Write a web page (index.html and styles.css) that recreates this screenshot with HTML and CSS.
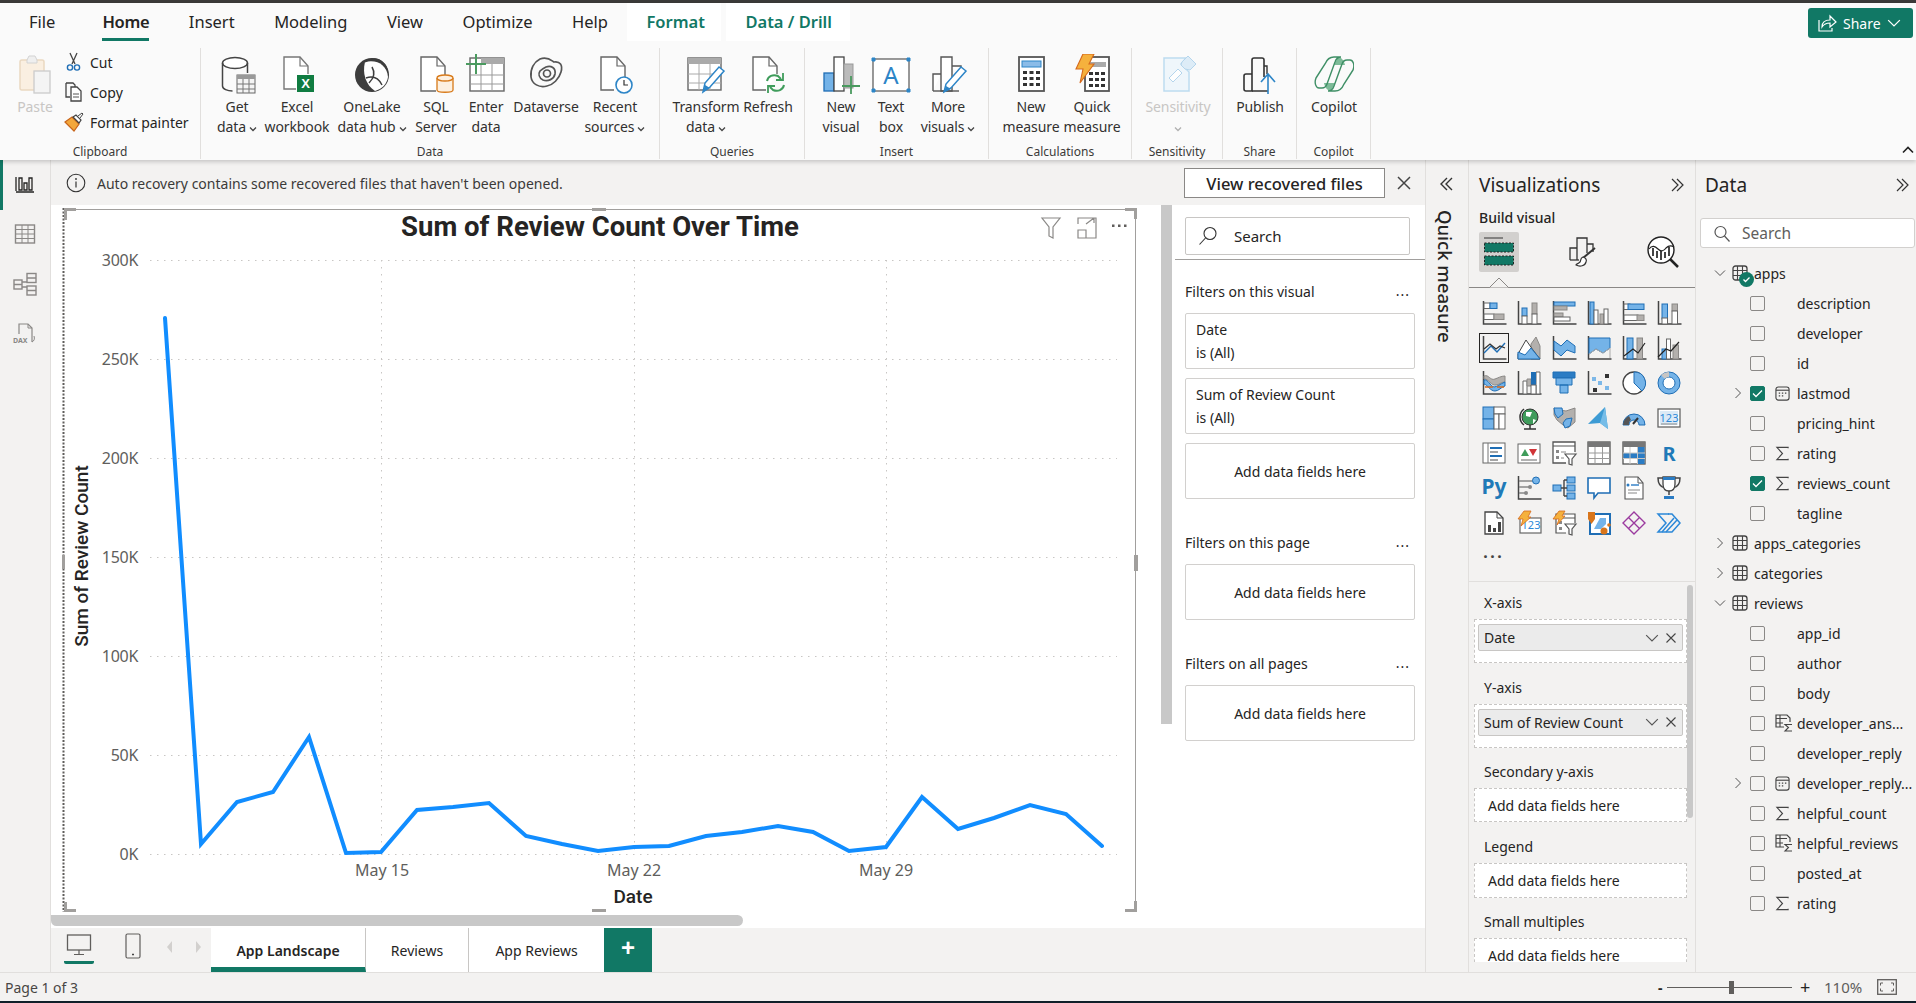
FILE: index.html
```html
<!DOCTYPE html>
<html lang="en">
<head>
<meta charset="utf-8">
<title>Power BI Desktop</title>
<link rel="stylesheet" href="styles.css">
</head>
<body>
<svg class="defs" xmlns="http://www.w3.org/2000/svg">
  <symbol id="tbl" viewBox="0 0 16 16"><rect x="1" y="1" width="14" height="14" rx="2.5" fill="none" stroke="#444" stroke-width="1.3"/><path d="M1 5.5h14M1 10.5h14M5.5 1v14M10.5 1v14" stroke="#444" stroke-width="1.1" fill="none"/></symbol>
  <symbol id="sig" viewBox="0 0 16 16"><path d="M14 2.5V1.5H2l6 6.5-6 6.5h12v-1" fill="none" stroke="#444" stroke-width="1.2"/></symbol>
  <symbol id="cal" viewBox="0 0 16 16"><rect x="1" y="1" width="14" height="14" rx="2.5" fill="none" stroke="#444" stroke-width="1.2"/><path d="M1 4.5h14" stroke="#444" stroke-width="1.2"/><path d="M4 7.5h1.5M7.3 7.5h1.5M10.6 7.5h1.5M4 10.5h1.5M7.3 10.5h1.5" stroke="#444" stroke-width="1.3"/></symbol>
  <symbol id="mtb" viewBox="0 0 18 18"><path d="M9 13H1V1h11l3 3v4" fill="none" stroke="#444" stroke-width="1.2"/><path d="M1 4.5h11M5 1v12M1 9h7" stroke="#444" stroke-width="1.1" fill="none"/><path d="M17 10.5h-7l3.5 3-3.5 3.5h7" fill="none" stroke="#444" stroke-width="1.1"/></symbol>
  <symbol id="chd" viewBox="0 0 12 12"><path d="M1 3.5l5 5 5-5" fill="none" stroke="#555" stroke-width="1"/></symbol>
  <symbol id="chr" viewBox="0 0 12 12"><path d="M3.5 1l5 5-5 5" fill="none" stroke="#555" stroke-width="1"/></symbol>
  <symbol id="x" viewBox="0 0 12 12"><path d="M1.5 1.5l9 9M10.5 1.5l-9 9" fill="none" stroke="#444" stroke-width="1.1"/></symbol>
  <symbol id="dbl" viewBox="0 0 16 16"><path d="M3 2l6 6-6 6M8 2l6 6-6 6" fill="none" stroke="#333" stroke-width="1.2"/></symbol>
  <symbol id="dbll" viewBox="0 0 16 16"><path d="M13 2L7 8l6 6M8 2L2 8l6 6" fill="none" stroke="#333" stroke-width="1.4"/></symbol>
  <symbol id="mag" viewBox="0 0 18 18"><circle cx="7.5" cy="7" r="5.5" fill="none" stroke="#555" stroke-width="1.2"/><path d="M11.5 11l5 5.5" stroke="#555" stroke-width="1.2"/></symbol>
  <symbol id="mini" viewBox="0 0 8 8"><path d="M1 2.5l3 3 3-3" fill="none" stroke="#444" stroke-width="1.3"/></symbol>
</svg>

<div class="topbar"></div>

<header class="ribbon">
  <nav class="tabs">
    <span class="tab file">File</span>
    <span class="tab on">Home</span>
    <span class="tab">Insert</span>
    <span class="tab">Modeling</span>
    <span class="tab">View</span>
    <span class="tab">Optimize</span>
    <span class="tab">Help</span>
    <span class="ctx first">Format</span>
    <span class="ctx">Data / Drill</span>
    <button class="share">
      <svg width="20" height="20" viewBox="0 0 20 20"><path d="M2 7v11h13v-3" fill="none" stroke="#fff" stroke-width="1.2"/><path d="M5 14c0-5 3-7 8-7V3l6 6-6 5v-4c-4 0-6 1-8 4z" fill="none" stroke="#fff" stroke-width="1.2"/></svg>
      <span>Share</span>
      <svg width="14" height="14" viewBox="0 0 12 12"><path d="M1 3.5l5 5 5-5" fill="none" stroke="#fff" stroke-width="1.1"/></svg>
    </button>
  </nav>
  <div class="groups">
    <section class="group g-clip">
      <div class="items pl14">
        <div class="item w42 dim">
          <svg class="ico" viewBox="0 0 40 40"><rect x="5" y="6" width="24" height="30" rx="2" fill="#fbeedd" stroke="#e8d3b8" stroke-width="1.5"/><path d="M12 6l2-4h6l2 4v3H12z" fill="#eee" stroke="#ccc"/><rect x="19" y="17" width="16" height="22" fill="#f4f4f4" stroke="#c4c4c4" stroke-width="1.3"/></svg>
          <div class="lbl">Paste</div>
        </div>
        <ul class="cliplist">
          <li><svg class="sm" viewBox="0 0 20 20"><path d="M6 1l5 11M13 1L8 12" stroke="#444" stroke-width="1.3" fill="none"/><circle cx="6" cy="15.5" r="2.6" fill="none" stroke="#1f6eb5" stroke-width="1.4"/><circle cx="13" cy="15.5" r="2.6" fill="none" stroke="#1f6eb5" stroke-width="1.4"/></svg>Cut</li>
          <li><svg class="sm" viewBox="0 0 20 20"><path d="M2 1h7l2 2v2M2 1v14h4" fill="none" stroke="#444" stroke-width="1.3"/><path d="M7 5h6l4 4v10H7z" fill="#fff" stroke="#444" stroke-width="1.3"/><path d="M9 12h6M9 15h6" stroke="#555"/></svg>Copy</li>
          <li><svg class="sm" viewBox="0 0 20 20"><path d="M1 10l7-5 7 7-5 7z" fill="#f3a73c" stroke="#c8651b" stroke-width="1.2"/><path d="M9 5l3-2 5 5-2 3z" fill="#fff" stroke="#444" stroke-width="1.2"/><path d="M14 4l4-3 1 1-3 4" fill="#fff" stroke="#444"/></svg>Format painter</li>
        </ul>
      </div>
      <div class="gname">Clipboard</div>
    </section>

    <section class="group g-data">
      <div class="items pl6">
        <div class="item w60">
          <svg class="ico" viewBox="0 0 40 40"><ellipse cx="18" cy="9" rx="12.5" ry="5.5" fill="#fff" stroke="#444" stroke-width="1.5"/><path d="M5.500 9v23c0 3 5 5 10 5" fill="none" stroke="#444" stroke-width="1.5"/><path d="M30.500 9v10" stroke="#444" stroke-width="1.5"/><rect x="20" y="21" width="18" height="18" fill="#f4f4f4" stroke="#666"/><rect x="20" y="21" width="18" height="4" fill="#999"/><path d="M26 25v14M32 25v14M20 30h18M20 35h18" stroke="#777"/></svg>
          <div class="lbl">Get<br>data<svg class="mini"><use href="#mini"/></svg></div>
        </div>
        <div class="item w60">
          <svg class="ico" viewBox="0 0 40 40"><path d="M19 35H7V3h16l8 9v8" fill="#fff" stroke="#777" stroke-width="1.4"/><path d="M23 3v9h8" fill="none" stroke="#777" stroke-width="1.2"/><rect x="20" y="21" width="17" height="17" fill="#107c41"/><text x="28.500" y="34" class="xl">X</text></svg>
          <div class="lbl">Excel<br>workbook</div>
        </div>
        <div class="item w90">
          <svg class="ico" viewBox="0 0 40 40"><circle cx="20" cy="21" r="17" fill="#3d3d3d"/><path d="M13 8c12-3 22 3 23 15-1 7-6 12-13 14C14 31 10 20 13 8z" fill="#fff"/><path d="M14 24c6-2 12-1 16 7M20 13c3 5 2 11-3 16M13 8c4-3 10-4 14-2 4 2 7 6 8 10" fill="none" stroke="#3d3d3d" stroke-width="1.5"/></svg>
          <div class="lbl">OneLake<br>data hub<svg class="mini"><use href="#mini"/></svg></div>
        </div>
        <div class="item w38">
          <svg class="ico" viewBox="0 0 40 40"><path d="M20 37H5V3h16l8 9v10" fill="#fff" stroke="#666" stroke-width="1.4"/><path d="M21 3v9h8" fill="none" stroke="#666" stroke-width="1.2"/><path d="M21 24v12c0 3 16 3 16 0V24" fill="#fdf0e0" stroke="#d87a1a" stroke-width="1.3"/><ellipse cx="29" cy="24" rx="8" ry="3" fill="#fdf0e0" stroke="#d87a1a" stroke-width="1.3"/></svg>
          <div class="lbl">SQL<br>Server</div>
        </div>
        <div class="item w62">
          <svg class="ico" viewBox="0 0 40 40"><rect x="4" y="4" width="34" height="33" fill="#fff" stroke="#666" stroke-width="1.4"/><rect x="15" y="4" width="23" height="6" fill="#aaa"/><path d="M15 10v27M26 10v27M4 21h34M4 30h34" stroke="#999"/><path d="M10 0v20M0 10h20" stroke="#4a9a5f" stroke-width="2"/></svg>
          <div class="lbl">Enter<br>data</div>
        </div>
        <div class="item w58">
          <svg class="ico" viewBox="0 0 40 40" fill="none" stroke="#555" stroke-width="1.7"><path d="M14 5c8-3 12 2 14 3 6-1 9 3 7 10-2 7-8 13-14 14C13 34 6 30 5 23 4 15 8 8 14 5z"/><path d="M20 13c5-2 10 1 9 7-1 5-7 8-12 6-4-2-5-6-3-9 2-2 4-3 6-4z"/><circle cx="21" cy="19.500" r="3.500"/></svg>
          <div class="lbl">Dataverse</div>
        </div>
        <div class="item w80">
          <svg class="ico" viewBox="0 0 40 40"><path d="M19 36H6V3h16l8 9v11" fill="#fff" stroke="#666" stroke-width="1.4"/><path d="M22 3v9h8" fill="none" stroke="#666" stroke-width="1.2"/><circle cx="29" cy="31" r="8" fill="#fff" stroke="#2d85c7" stroke-width="1.6"/><path d="M29 26v5h4" fill="none" stroke="#333" stroke-width="1.2"/></svg>
          <div class="lbl">Recent<br>sources<svg class="mini"><use href="#mini"/></svg></div>
        </div>
      </div>
      <div class="gname">Data</div>
    </section>

    <section class="group g-query">
      <div class="items pl1">
        <div class="item w90">
          <svg class="ico" viewBox="0 0 40 40"><rect x="2" y="4" width="33" height="32" fill="#fff" stroke="#666" stroke-width="1.4"/><rect x="2" y="4" width="33" height="6" fill="#aaa"/><path d="M13 10v26M24 10v26M2 20h33M2 29h33" stroke="#aaa"/><path d="M17 38l2-9 14-16 5 4-14 16z" fill="#fff" stroke="#2d85c7" stroke-width="1.5"/><path d="M17 38l2-7 5 3z" fill="#2d85c7"/></svg>
          <div class="lbl">Transform<br>data<svg class="mini"><use href="#mini"/></svg></div>
        </div>
        <div class="item w34">
          <svg class="ico" viewBox="0 0 40 40"><path d="M18 36H5V3h16l8 9v8" fill="#fff" stroke="#666" stroke-width="1.4"/><path d="M21 3v9h8" fill="none" stroke="#666" stroke-width="1.2"/><path d="M19 27c1-5 6-7 11-5l3 3M36 31c-1 5-6 7-11 5l-3-3" fill="none" stroke="#3f9c5b" stroke-width="2"/><path d="M35 19v7h-7M20 39v-7h7" fill="none" stroke="#3f9c5b" stroke-width="1.8"/></svg>
          <div class="lbl">Refresh</div>
        </div>
      </div>
      <div class="gname">Queries</div>
    </section>

    <section class="group g-insert">
      <div class="items pl11">
        <div class="item w50">
          <svg class="ico" viewBox="0 0 40 40"><rect x="3" y="19" width="10" height="18" fill="#74b3e8" stroke="#1f6eb5" stroke-width="1.3"/><rect x="13" y="3" width="10" height="34" fill="#fff" stroke="#444" stroke-width="1.3"/><rect x="23" y="10" width="9" height="24" fill="#bbb" stroke="#999"/><path d="M30 22v18M21 32h18" stroke="#4a9a5f" stroke-width="1.8"/></svg>
          <div class="lbl">New<br>visual</div>
        </div>
        <div class="item w50">
          <svg class="ico" viewBox="0 0 40 40"><rect x="2" y="5" width="36" height="32" fill="#fff" stroke="#555" stroke-width="1.2"/><path d="M1 4h3v3H1zM36 4h3v3h-3zM1 35h3v3H1zM36 35h3v3h-3z" fill="#2d85c7" stroke="#2d85c7"/><text x="20" y="30" class="alett">A</text></svg>
          <div class="lbl">Text<br>box</div>
        </div>
        <div class="item w64">
          <svg class="ico" viewBox="0 0 40 40"><path d="M5 37V20h8M13 37V3h11v34zM24 12h9v10" fill="#fff" stroke="#555" stroke-width="1.4"/><path d="M5 37h26" stroke="#555" stroke-width="1.4"/><path d="M16 38l2-8 15-17 5 4-15 17z" fill="#fff" stroke="#2d85c7" stroke-width="1.5"/><path d="M16 38l2-6 5 3z" fill="#2d85c7"/></svg>
          <div class="lbl">More<br>visuals<svg class="mini"><use href="#mini"/></svg></div>
        </div>
      </div>
      <div class="gname">Insert</div>
    </section>

    <section class="group g-calc">
      <div class="items pl12">
        <div class="item w60">
          <svg class="ico" viewBox="0 0 40 40"><rect x="8" y="3" width="25" height="34" fill="#fff" stroke="#555" stroke-width="1.8"/><rect x="11" y="7" width="19" height="6" fill="#8bbce8" stroke="#2d85c7"/><path d="M12 17h4v3h-4zM18.500 17h4v3h-4zM25 17h4v3h-4zM12 23h4v3h-4zM18.500 23h4v3h-4zM25 23h4v3h-4zM12 29h4v3h-4zM18.500 29h4v3h-4zM25 29h4v3h-4z" fill="#333"/></svg>
          <div class="lbl">New<br>measure</div>
        </div>
        <div class="item w62">
          <svg class="ico" viewBox="0 0 40 40"><rect x="13" y="3" width="24" height="34" fill="#fff" stroke="#555" stroke-width="1.8"/><rect x="18" y="8" width="16" height="5" fill="#aaa"/><path d="M17 18h4v3h-4zM23 18h4v3h-4zM29 18h4v3h-4zM17 24h4v3h-4zM23 24h4v3h-4zM29 24h4v3h-4zM17 30h4v3h-4zM23 30h4v3h-4zM29 30h4v3h-4z" fill="#333"/><path d="M11 0h11l-5 10h5L8 29l3-14H4z" fill="#f5b13d" stroke="#d6691c" stroke-width="1.1"/></svg>
          <div class="lbl">Quick<br>measure</div>
        </div>
      </div>
      <div class="gname">Calculations</div>
    </section>

    <section class="group g-sens">
      <div class="items pl1">
        <div class="item w90 dim">
          <svg class="ico" viewBox="0 0 40 40"><path d="M6 4h22l-5 6 8 8v19H6z" fill="#eef6fc" stroke="#b4d7ee" stroke-width="1.5"/><path d="M24 8l6-6 8 8-6 6-5-1-4-4z" fill="#d8eaf7" stroke="#a9cfea"/><path d="M11 24l9-9 4 4-9 9z" fill="#fff" stroke="#a9cfea"/></svg>
          <div class="lbl">Sensitivity<br><svg class="mini"><use href="#mini"/></svg></div>
        </div>
      </div>
      <div class="gname">Sensitivity</div>
    </section>

    <section class="group g-share">
      <div class="items">
        <div class="item w74">
          <svg class="ico" viewBox="0 0 40 40"><path d="M6 37a2 2 0 0 1-2-2V22a2 2 0 0 1 2-2h6v17zM12 37V6a2 2 0 0 1 2-2h8a2 2 0 0 1 2 2v17" fill="none" stroke="#333" stroke-width="1.6"/><path d="M12 37h16M24 12h3v8" fill="none" stroke="#333" stroke-width="1.4"/><path d="M28 40V21M21 28l7-8 7 8" fill="none" stroke="#2d85c7" stroke-width="1.6"/></svg>
          <div class="lbl">Publish</div>
        </div>
      </div>
      <div class="gname">Share</div>
    </section>

    <section class="group g-copilot">
      <div class="items">
        <div class="item w74">
          <svg class="ico" viewBox="0 0 40 40"><path d="M24 3c3 0 6 3 7 8H20zM17 37c-3 0-6-3-7-8h11z" fill="#7dbb98"/><path d="M2 24l9-14c2-5 5-7 9-7h7c-3 0-5 2-6 5L13 30c-1 3-3 4-5 4H5c-3 0-5-5-3-10z" fill="none" stroke="#3f8f66" stroke-width="1.400"/><path d="M39 16l-9 14c-2 5-5 7-9 7h-7c3 0 5-2 6-5l8-22c1-3 3-4 5-4h3c3 0 5 5 3 10z" fill="none" stroke="#3f8f66" stroke-width="1.400"/></svg>
          <div class="lbl">Copilot</div>
        </div>
      </div>
      <div class="gname">Copilot</div>
    </section>
    <svg class="collapse" width="12" height="8" viewBox="0 0 12 8"><path d="M1 6.500l5-5 5 5" fill="none" stroke="#222" stroke-width="1.6"/></svg>
  </div>
</header>

<main class="main">
  <aside class="rail">
    <div class="railbtn active"><svg width="22" height="22" viewBox="0 0 22 22"><path d="M2 4v14M2 19h18M5 5h3v12H5zM10 10h3v7h-3zM15 5h3v12h-3z" fill="none" stroke="#252423" stroke-width="1.3"/></svg></div>
    <div class="railbtn"><svg width="22" height="22" viewBox="0 0 22 22"><rect x="1.500" y="2" width="19" height="18" fill="none" stroke="#8a8886" stroke-width="1.4"/><path d="M1.500 6.500h19M1.500 11h19M1.500 15.500h19M8 2v18M14 2v18" stroke="#8a8886" fill="none"/></svg></div>
    <div class="railbtn"><svg width="24" height="24" viewBox="0 0 24 24" fill="none" stroke="#8a8886" stroke-width="1.4"><rect x="1" y="8" width="8" height="9"/><rect x="14" y="1.500" width="9" height="9"/><rect x="14" y="14" width="9" height="9"/><path d="M1 12.500h8M14 6h9M14 18.500h9M9 10h5M9 15h5"/></svg></div>
    <div class="railbtn"><svg width="24" height="24" viewBox="0 0 24 24"><path d="M6 12V2h9l4 4v14" fill="none" stroke="#8a8886" stroke-width="1.2"/><path d="M15 2v4h4M19 20c2-1 3-3 2-6" fill="none" stroke="#8a8886"/><text x="0" y="21" class="daxt">DAX</text></svg></div>
  </aside>

  <div class="center">
    <div class="notice">
      <svg class="infoi" width="20" height="20" viewBox="0 0 20 20"><circle cx="10" cy="10" r="8.800" fill="none" stroke="#333" stroke-width="1.1"/><path d="M10 8.500v6" stroke="#333" stroke-width="1.2"/><circle cx="10" cy="6" r=".9" fill="#333"/></svg>
      <span class="msg">Auto recovery contains some recovered files that haven't been opened.</span>
      <button class="viewbtn">View recovered files</button>
      <svg class="closex" width="16" height="16"><use href="#x"/></svg>
    </div>

    <div class="workrow">
      <div class="canvas">
        <svg class="chart" viewBox="51 205 1124 723" width="1124" height="723">
          <g class="grid">
            <path d="M150 260.500H1117M150 359.500H1117M150 458.500H1117M150 557.500H1117M150 656.500H1117M150 755.500H1117M150 854.500H1117M381.500 260V854M634.500 260V854M886.500 260V854"/>
          </g>
          <g class="ytick">
            <text x="138" y="266">300K</text><text x="138" y="365">250K</text><text x="138" y="464">200K</text><text x="138" y="563">150K</text><text x="138" y="662">100K</text><text x="138" y="761">50K</text><text x="138" y="860">0K</text>
          </g>
          <g class="xtick">
            <text x="382" y="876">May 15</text><text x="634" y="876">May 22</text><text x="886" y="876">May 29</text>
          </g>
          <text class="ctitle" x="600" y="236">Sum of Review Count Over Time</text>
          <text class="axt" x="633" y="903">Date</text>
          <text class="axt" transform="translate(88 556) rotate(-90)">Sum of Review Count</text>
          <polyline class="series" points="165,318 201,844 237,802 273,792 309,737 346,853 381,852 417,810 453,807 489,803 526,836 562,844 598,851 634,847 669,846 706,836 742,832 778,826 813,832 849,851 886,847 922,797 958,829 994,818 1030,805 1066,814 1102,846"/>
          <path class="frame" d="M64 209.500H1135.500V905"/>
          <path class="dotsl" d="M63.500 208V912"/>
          <path class="hdl" d="M64 208h12v3H67v9h-3zM1125 208h12v11h-3v-8h-9zM1125 909h9v-8h3v11h-12zM64 902h3v7h9v3H64zM592 208h14v3h-14zM592 909h14v3h-14zM62 555h3v14h-3zM1134 555h4v16h-4z"/>
          <g class="vh">
            <path d="M1042 218h18l-7 9v11l-4-2v-9z"/>
            <path d="M1078 224v-6h18v20h-18v-7M1078 238v-8h8v8M1086 224l8-6M1089 218h5v5"/>
          </g>
          <path class="vdots" d="M1112 224.500h2.500v2.500h-2.500zM1118 224.500h2.500v2.500h-2.500zM1124 224.500h2.500v2.500h-2.500z"/>
        </svg>
        <div class="vscroll"></div>
        <div class="hscroll"></div>
      </div>

      <aside class="filters">
        <div class="fsearchwrap">
          <div class="fsearch">
            <svg width="20" height="20" viewBox="0 0 20 20"><circle cx="12" cy="7.500" r="6" fill="none" stroke="#333" stroke-width="1.1"/><path d="M7.500 12L1.500 18.500" stroke="#333" stroke-width="1.1"/></svg>
            <span>Search</span>
          </div>
        </div>
        <div class="fgroup first">
          <div class="fhead"><span>Filters on this visual</span><b>...</b></div>
          <div class="fcard left"><span>Date</span><span>is (All)</span></div>
          <div class="fcard left"><span>Sum of Review Count</span><span>is (All)</span></div>
          <div class="fcard add">Add data fields here</div>
        </div>
        <div class="fgroup">
          <div class="fhead"><span>Filters on this page</span><b>...</b></div>
          <div class="fcard add">Add data fields here</div>
        </div>
        <div class="fgroup">
          <div class="fhead"><span>Filters on all pages</span><b>...</b></div>
          <div class="fcard add">Add data fields here</div>
        </div>
      </aside>
    </div>

    <div class="pagebar">
      <div class="devices">
        <div class="dev on"><svg width="26" height="24" viewBox="0 0 26 24"><rect x="1.500" y="2" width="23" height="15" fill="none" stroke="#605e5c" stroke-width="1.300"/><path d="M13 17v4M8 21.500h10" stroke="#605e5c" stroke-width="1.200"/></svg></div>
        <div class="dev"><svg width="16" height="26" viewBox="0 0 16 26"><rect x="1" y="1" width="14" height="24" rx="1.500" fill="none" stroke="#605e5c" stroke-width="1.200"/><path d="M7 21.500h2" stroke="#444" stroke-width="1.500"/></svg></div>
        <svg class="parrow" width="8" height="14" viewBox="0 0 8 14"><path d="M6 1L1 7l5 6z" fill="#d2d0ce"/></svg>
        <svg class="parrow two" width="8" height="14" viewBox="0 0 8 14"><path d="M2 1l5 6-5 6z" fill="#d2d0ce"/></svg>
      </div>
      <div class="ptab active">App Landscape</div>
      <div class="ptab rev">Reviews</div>
      <div class="ptab arev">App Reviews</div>
      <div class="padd">+</div>
    </div>
  </div>

  <aside class="qm">
    <svg width="16" height="16"><use href="#dbll"/></svg>
    <div class="qmtxt">Quick measure</div>
  </aside>

  <aside class="viz">
    <div class="phead"><h2>Visualizations</h2><svg width="16" height="16"><use href="#dbl"/></svg></div>
    <div class="buildlbl">Build visual</div>
    <div class="vtabs">
      <div class="vtab sel">
        <svg width="32" height="32" viewBox="0 0 32 32"><path d="M1 2h19" stroke="#333" stroke-width="1"/><rect x="1.500" y="7" width="29" height="9" fill="#117865" stroke="#222" stroke-dasharray="2 1.500"/><rect x="1.500" y="20" width="29" height="9" fill="#117865" stroke="#222" stroke-dasharray="2 1.500"/></svg>
      </div>
      <div class="vtab">
        <svg width="30" height="32" viewBox="0 0 30 32"><path d="M2 24V12h7M9 24V2h10v15M19 8h6v8" fill="none" stroke="#333" stroke-width="1.300"/><path d="M2 24h9" stroke="#333" stroke-width="1.300"/><path d="M27 12L15 22" stroke="#333" stroke-width="2"/><path d="M15 21c-3 1-2 4-3 5-2 2-4 2-4 3 4 2 9 1 10-3 1-2 0-4-3-5z" fill="#fff" stroke="#333" stroke-width="1.200"/></svg>
      </div>
      <div class="vtab">
        <svg width="32" height="32" viewBox="0 0 32 32"><circle cx="14" cy="14" r="13" fill="#fff" stroke="#222" stroke-width="1.400"/><path d="M6 20v-8M10 22v-7M14 24v-9M18 22v-6M22 20v-9" stroke="#444" stroke-width="2"/><path d="M2 13c3-4 6-3 9 0 3 3 6 2 8-1 2-2 5-3 8-1" fill="none" stroke="#222" stroke-width="1.200"/><path d="M23 23l8 8" stroke="#222" stroke-width="2.500"/></svg>
      </div>
      <svg class="caret" width="22" height="11" viewBox="0 0 22 11"><path d="M0 10.500h1.500l9.500-9.500 9.500 9.500H22" fill="#f3f2f1" stroke="#8a8886"/></svg>
    </div>
    <div class="vgrid">
      <!-- row 1 -->
      <svg viewBox="0 0 24 24"><path class="s" d="M1.500 0v23h23"/><rect class="wh" x="2" y="2" width="6" height="5.500"/><rect class="bl" x="8" y="2" width="7" height="5.500"/><rect class="wh" x="2" y="13" width="10" height="5.500"/><rect class="gr" x="12" y="13" width="10" height="5.500"/></svg>
      <svg viewBox="0 0 24 24"><path class="s" d="M1.500 0v23h23"/><rect class="bl" x="5" y="7" width="5" height="8"/><rect class="wh" x="5" y="15" width="5" height="8"/><rect class="gr" x="15" y="2" width="5" height="11"/><rect class="wh" x="15" y="13" width="5" height="10"/></svg>
      <svg viewBox="0 0 24 24"><path class="s" d="M1.500 0v23h23"/><rect class="bl" x="2" y="1" width="21" height="4"/><rect class="gr" x="2" y="5" width="13" height="4"/><rect class="gr" x="2" y="12" width="9" height="4"/><rect class="wh" x="2" y="16" width="16" height="4"/></svg>
      <svg viewBox="0 0 24 24"><path class="s" d="M1.500 0v23h23"/><rect class="bl" x="3" y="1" width="4" height="22"/><rect class="wh" x="7" y="9" width="4" height="14"/><rect class="gr" x="13" y="13" width="4" height="10"/><rect class="wh" x="17" y="8" width="4" height="15"/></svg>
      <svg viewBox="0 0 24 24"><path class="s" d="M1.500 0v23h23"/><rect class="wh" x="2" y="3" width="6" height="5.500"/><rect class="bl" x="6" y="3" width="16" height="5.500"/><rect class="wh" x="2" y="14" width="14" height="5.500"/><rect class="gr" x="15" y="14" width="7" height="5.500"/></svg>
      <svg viewBox="0 0 24 24"><path class="s" d="M1.500 0v23h23"/><rect class="bl" x="5" y="3" width="5.500" height="15"/><rect class="wh" x="5" y="17" width="5.500" height="6"/><rect class="gr" x="15" y="3" width="5.500" height="7"/><rect class="wh" x="15" y="10" width="5.500" height="13"/></svg>
      <!-- row 2 -->
      <svg class="selected" viewBox="0 0 24 24"><path class="s" d="M1.500 0v23h23"/><path d="M2 17l7-7 6 6 8-9" fill="none" stroke="#1f6eb5" stroke-width="1.400"/><path d="M2 13l6-5 6 5 4-3 5 2" fill="none" stroke="#333" stroke-width="1.300"/></svg>
      <svg viewBox="0 0 24 24"><path class="gr" d="M14 23V8l5-7 4 9v13z"/><path d="M1 18L9 4l7 10 7 9H1z" fill="#fff" stroke="#444"/><path class="bl" d="M1 16l7 3 6-7 9 11H1z"/></svg>
      <svg viewBox="0 0 24 24"><path class="s" d="M1.500 0v23h23"/><path class="bl" d="M2 5l7 5 6-6 8 6v7l-8-3-6 6-7-6z"/></svg>
      <svg viewBox="0 0 24 24"><path class="s" d="M1.500 0v23h23"/><path class="bl" d="M2 2h21v10l-7 5-7-4-7 5z"/><path d="M2 18l7-5 7 4 7-5v10" fill="none" stroke="#aaa"/></svg>
      <svg viewBox="0 0 24 24"><path class="s" d="M1.500 0v23h23"/><rect class="bl" x="5" y="2" width="6" height="21"/><rect class="gr" x="15" y="2" width="5.500" height="21"/><path d="M2 20l9-7 5 4 7-10" fill="none" stroke="#222" stroke-width="1.200"/></svg>
      <svg viewBox="0 0 24 24"><path class="s" d="M1.500 0v23h23"/><rect class="bl" x="5" y="13" width="4.500" height="10"/><rect class="wh" x="9.500" y="3" width="4" height="20"/><rect class="gr" x="16" y="9" width="5.500" height="14"/><path d="M1 21l8-8 5 2 8-9" fill="none" stroke="#222" stroke-width="1.200"/></svg>
      <!-- row 3 -->
      <svg viewBox="0 0 24 24"><path class="s" d="M1.500 0v23h23"/><path class="gr" d="M2 5c5-2 6 5 11 3 3-1 6-3 10-3v6c-4 0-6 3-9 3-5 1-7-6-12-6z"/><path class="bl" d="M2 9c4-1 6 6 10 7 3 0 6-3 11-5v4c-4 1-6 5-10 5-5 0-7-6-11-7z"/><path d="M3 16h8M15 16h7" fill="none" stroke="#d6691c" stroke-width="1.500"/></svg>
      <svg viewBox="0 0 24 24"><path class="s" d="M1.500 0v23h23"/><path class="wh" d="M6 10h4v13H6zM19 1h4v22h-4z"/><path class="gr" d="M10 8h4v7h-4z"/><path d="M14 1h5v13h-5z" fill="#1f6eb5"/><path class="wh" d="M14 14h5v9h-5z"/></svg>
      <svg viewBox="0 0 24 24"><path d="M1 1h22v6H1z" fill="#2b7cc4" stroke="#1f6eb5"/><path class="bl" d="M4 7h16v7H4zM8 14h8v8H8z"/></svg>
      <svg viewBox="0 0 24 24"><path class="s" d="M1.500 0v23h23"/><path d="M18 3h4v4h-4zM6 17h4v4H6z" fill="#333"/><path d="M5 6h4v4H5zM11 10h4v4h-4zM18 15h4v4h-4z" fill="#7db8e8"/></svg>
      <svg viewBox="0 0 24 24"><circle cx="12" cy="12" r="11" fill="#fff" stroke="#444" stroke-width="1.300"/><path class="bl" d="M12 1a11 11 0 0 1 8 19l-8-8z"/></svg>
      <svg viewBox="0 0 24 24"><circle cx="12" cy="12" r="8.500" fill="none" stroke="#74b3e8" stroke-width="5"/><circle cx="12" cy="12" r="11" fill="none" stroke="#1f6eb5"/><circle cx="12" cy="12" r="6" fill="#fff" stroke="#1f6eb5"/><path d="M12 3.500a8.500 8.500 0 0 0-6 2.500" fill="none" stroke="#c8c6c4" stroke-width="5"/></svg>
      <!-- row 4 -->
      <svg viewBox="0 0 24 24"><rect class="bl" x="1" y="1" width="11" height="12"/><rect class="bl" x="1" y="13" width="11" height="10"/><rect class="wh" x="12" y="1" width="11" height="7"/><rect class="wh" x="12" y="8" width="5" height="15"/><rect class="wh" x="17" y="8" width="6" height="15"/></svg>
      <svg viewBox="0 0 24 24"><circle cx="13" cy="11" r="8" fill="#3f9c5b" stroke="#333"/><path d="M9 6h6l-2 5-4-1zM16 13l3 1-3 4z" fill="#fff"/><path d="M7 3a10 10 0 0 0 0 16M7 23h12M13 19v4" fill="none" stroke="#333" stroke-width="1.500"/></svg>
      <svg viewBox="0 0 24 24"><path class="gr" d="M2 2l6 2 6 1 9-3v14l-7 6-5-3-6-5-3-5z"/><path class="bl" d="M2 2h8l1 6-5 4-3-4z"/><path class="bl" d="M14 13l6-1-2 8-5 2-2-5z"/></svg>
      <svg viewBox="0 0 24 24"><path d="M18 1L1 18l12-1 8 6z" fill="#3d9bd4"/><path d="M18 1l-5 16 8 6z" fill="#76bde8"/></svg>
      <svg viewBox="0 0 24 24"><path class="bl" d="M1 19a11 11 0 0 1 22 0h-6a5 5 0 0 0-10 0z"/><path d="M1 19a11 11 0 0 1 6-9l2 4a5 5 0 0 0-2 5z" fill="#555"/><path d="M11 18l5-6" stroke="#333" stroke-width="2"/></svg>
      <svg viewBox="0 0 24 24"><rect x="1" y="3" width="22" height="18" fill="#fff" stroke="#666" stroke-width="1.300"/><rect x="3" y="5" width="18" height="14" fill="#dbeaf6"/><text x="12" y="15.500" class="n123">123</text><path d="M4 18h16" stroke="#888"/></svg>
      <!-- row 5 -->
      <svg viewBox="0 0 24 24"><rect class="wh" x="1" y="2" width="22" height="20"/><path d="M6 2v20" stroke="#777"/><path d="M8 7h12" stroke="#1f6eb5" stroke-width="2"/><path d="M8 11h8M8 19h8" stroke="#888" stroke-width="1.500"/><path d="M8 15h12" stroke="#1f6eb5" stroke-width="2"/></svg>
      <svg viewBox="0 0 24 24"><rect class="wh" x="1" y="3" width="22" height="19"/><path d="M4 15l4-7 4 7z" fill="#3f9c5b"/><path d="M12 8h8l-4 7z" fill="#d13438"/><path d="M4 19h16" stroke="#666"/></svg>
      <svg viewBox="0 0 24 24"><path d="M14 22H1V1h22v10" fill="#fff" stroke="#555" stroke-width="1.300"/><path d="M1 5h22" stroke="#555"/><path d="M4 9h3v3H4zM4 15h3v3H4z" fill="#888"/><path d="M9 11h5M9 17h3" stroke="#888"/><path d="M13 13h11l-4 5v6l-3-1v-5z" fill="#fff" stroke="#555" stroke-width="1.200"/></svg>
      <svg viewBox="0 0 24 24"><rect x="1" y="1" width="22" height="22" fill="#fff" stroke="#555" stroke-width="1.300"/><rect x="1" y="1" width="22" height="5" fill="#777"/><path d="M1 12h22M1 17.500h22M8 6v17M15.500 6v17" stroke="#999"/></svg>
      <svg viewBox="0 0 24 24"><rect x="1" y="1" width="22" height="22" fill="#fff" stroke="#555" stroke-width="1.300"/><rect x="1" y="1" width="22" height="5" fill="#777"/><rect x="1.500" y="12" width="21" height="5.500" fill="#2b7cc4"/><rect x="15.500" y="6" width="7" height="17" fill="#2b7cc4"/><path d="M1 12h22M1 17.500h22M8 6v17M15.500 6v17" stroke="#c8c6c4"/></svg>
      <svg viewBox="0 0 24 24"><text x="12" y="20" class="rl">R</text></svg>
      <!-- row 6 -->
      <svg viewBox="0 0 24 24"><text x="12" y="18" class="py">Py</text></svg>
      <svg viewBox="0 0 24 24"><path class="s" d="M1.500 0v23h23"/><path d="M2 5h14M2 11h11M2 17h8" stroke="#888" stroke-width="1.500"/><circle cx="19" cy="4.500" r="3.500" fill="#74b3e8" stroke="#1f6eb5"/><circle cx="13" cy="11" r="2" fill="#888"/><circle cx="9" cy="17" r="2" fill="#888"/></svg>
      <svg viewBox="0 0 24 24"><rect class="bl" x="1" y="9" width="8" height="6"/><rect class="bl" x="15" y="1" width="8" height="6"/><rect class="bl" x="15" y="9" width="8" height="6"/><rect class="bl" x="15" y="17" width="8" height="6"/><path d="M9 12h6M12 4v16M12 4h3M12 20h3" fill="none" stroke="#444" stroke-width="1.400"/></svg>
      <svg viewBox="0 0 24 24"><path d="M1 2h22v15H11l-4 5v-5H1z" fill="#fff" stroke="#1f6eb5" stroke-width="1.600"/></svg>
      <svg viewBox="0 0 24 24"><path d="M3 1h13l5 6v16H3z" fill="#fff" stroke="#555" stroke-width="1.100"/><path d="M16 1v6h5" fill="none" stroke="#555"/><circle cx="6" cy="9" r="1.500" fill="#2b7cc4"/><path d="M9 9h8" stroke="#2b7cc4" stroke-width="1.400"/><path d="M6 14h12M6 17h9" stroke="#888"/></svg>
      <svg viewBox="0 0 24 24"><path d="M6 2H1c0 6 2 9 7 10M18 2h5c0 6-2 9-7 10" fill="none" stroke="#444" stroke-width="1.500"/><path d="M6 1h12v7c0 5-3 7-6 7s-6-2-6-7z" fill="#fff" stroke="#444" stroke-width="1.300"/><path d="M6 1h12v3H6z" fill="#2b7cc4"/><path d="M12 15v4" stroke="#444" stroke-width="1.500"/><path d="M7 20h10v3H7z" fill="#2b7cc4"/></svg>
      <!-- row 7 -->
      <svg viewBox="0 0 24 24"><path d="M3 1h12l6 6v16H3z" fill="#fff" stroke="#444" stroke-width="1.300"/><path d="M15 1v6h6" fill="none" stroke="#444"/><path d="M6 14h3v7H6zM11 17h3v4h-3zM16 11h3v10h-3z" fill="#444"/></svg>
      <svg viewBox="0 0 24 24"><rect x="3" y="7" width="21" height="15" fill="#fff" stroke="#666" stroke-width="1.200"/><text x="14" y="17.500" class="n123">123</text><path d="M7 0h7l-3 6h3L4 15l2-7H1z" fill="#f5b13d" stroke="#d6691c" stroke-width=".8"/></svg>
      <svg viewBox="0 0 24 24"><path d="M14 22H4V3h19v9" fill="#fff" stroke="#555" stroke-width="1.200"/><path d="M4 7h19" stroke="#555"/><path d="M7 10h3v3H7zM7 16h3v3H7z" fill="#888"/><path d="M13 13h11l-4 5v6l-3-1v-5z" fill="#fff" stroke="#555" stroke-width="1.200"/><path d="M7 0h6l-3 5h3l-8 9 2-6H1z" fill="#f5b13d" stroke="#d6691c" stroke-width=".8"/></svg>
      <svg viewBox="0 0 24 24"><path d="M3 3h20v20H3z" fill="#fff" stroke="#1f6eb5" stroke-width="2"/><path d="M13 7h6v6l-5 5H7" fill="#74b3e8"/><path d="M1 1h7v7l-3.500 5L1 8z" fill="#d8751b"/><circle cx="17" cy="20" r="3.500" fill="#d8751b"/><circle cx="22" cy="14" r="1.800" fill="#d8751b"/></svg>
      <svg viewBox="0 0 24 24" fill="none" stroke="#9b3a9f" stroke-width="1.400"><path d="M12 1l11 11-11 11L1 12z"/><path d="M6.500 6.500l11 11M17.500 6.500l-11 11"/></svg>
      <svg viewBox="0 0 24 24" fill="none" stroke="#2b88d8" stroke-width="1.500"><path d="M1 3h14l8 9-8 9H1l8-9z"/><path d="M12 3l-1 0M5 21l12-14M9 21l11-12"/></svg>
    </div>
    <div class="vmore">...</div>
    <div class="wells">
      <div class="wlabel">X-axis</div>
      <div class="well has"><div class="chip"><span>Date</span><svg width="14" height="14"><use href="#chd"/></svg><svg width="12" height="12"><use href="#x"/></svg></div></div>
      <div class="wlabel">Y-axis</div>
      <div class="well has"><div class="chip"><span>Sum of Review Count</span><svg width="14" height="14"><use href="#chd"/></svg><svg width="12" height="12"><use href="#x"/></svg></div></div>
      <div class="wlabel">Secondary y-axis</div>
      <div class="well">Add data fields here</div>
      <div class="wlabel">Legend</div>
      <div class="well tall">Add data fields here</div>
      <div class="wlabel">Small multiples</div>
      <div class="well tall">Add data fields here</div>
      <div class="wscroll"></div>
    </div>
  </aside>

  <aside class="data">
    <div class="phead"><h2>Data</h2><svg width="16" height="16"><use href="#dbl"/></svg></div>
    <div class="dsearch"><svg width="18" height="18"><use href="#mag"/></svg><span>Search</span></div>
    <ul class="tree">
      <li class="t"><svg class="chev" width="12" height="12"><use href="#chd"/></svg><span class="tic badged"><svg width="16" height="16"><use href="#tbl"/></svg><svg class="badge" width="15" height="15" viewBox="0 0 15 15"><circle cx="7.500" cy="7.500" r="7.500" fill="#117865"/><path d="M4.500 7.500l2 2 4-4" fill="none" stroke="#fff" stroke-width="1.300"/></svg></span><span>apps</span></li>
      <li class="f"><i class="chev"></i><i class="cb"></i><i class="fic"></i><span>description</span></li>
      <li class="f"><i class="chev"></i><i class="cb"></i><i class="fic"></i><span>developer</span></li>
      <li class="f"><i class="chev"></i><i class="cb"></i><i class="fic"></i><span>id</span></li>
      <li class="f"><svg class="chev" width="12" height="12"><use href="#chr"/></svg><i class="cb on"><svg width="15" height="15" viewBox="0 0 15 15"><path d="M3 7.500l3 3 6-6" fill="none" stroke="#fff" stroke-width="1.300"/></svg></i><svg class="fic" width="15" height="15"><use href="#cal"/></svg><span>lastmod</span></li>
      <li class="f"><i class="chev"></i><i class="cb"></i><i class="fic"></i><span>pricing_hint</span></li>
      <li class="f"><i class="chev"></i><i class="cb"></i><svg class="fic" width="15" height="15"><use href="#sig"/></svg><span>rating</span></li>
      <li class="f"><i class="chev"></i><i class="cb on"><svg width="15" height="15" viewBox="0 0 15 15"><path d="M3 7.500l3 3 6-6" fill="none" stroke="#fff" stroke-width="1.300"/></svg></i><svg class="fic" width="15" height="15"><use href="#sig"/></svg><span>reviews_count</span></li>
      <li class="f"><i class="chev"></i><i class="cb"></i><i class="fic"></i><span>tagline</span></li>
      <li class="t"><svg class="chev" width="12" height="12"><use href="#chr"/></svg><span class="tic"><svg width="16" height="16"><use href="#tbl"/></svg></span><span>apps_categories</span></li>
      <li class="t"><svg class="chev" width="12" height="12"><use href="#chr"/></svg><span class="tic"><svg width="16" height="16"><use href="#tbl"/></svg></span><span>categories</span></li>
      <li class="t"><svg class="chev" width="12" height="12"><use href="#chd"/></svg><span class="tic"><svg width="16" height="16"><use href="#tbl"/></svg></span><span>reviews</span></li>
      <li class="f"><i class="chev"></i><i class="cb"></i><i class="fic"></i><span>app_id</span></li>
      <li class="f"><i class="chev"></i><i class="cb"></i><i class="fic"></i><span>author</span></li>
      <li class="f"><i class="chev"></i><i class="cb"></i><i class="fic"></i><span>body</span></li>
      <li class="f"><i class="chev"></i><i class="cb"></i><svg class="fic" width="18" height="18"><use href="#mtb"/></svg><span>developer_ans...</span></li>
      <li class="f"><i class="chev"></i><i class="cb"></i><i class="fic"></i><span>developer_reply</span></li>
      <li class="f"><svg class="chev" width="12" height="12"><use href="#chr"/></svg><i class="cb"></i><svg class="fic" width="15" height="15"><use href="#cal"/></svg><span>developer_reply...</span></li>
      <li class="f"><i class="chev"></i><i class="cb"></i><svg class="fic" width="15" height="15"><use href="#sig"/></svg><span>helpful_count</span></li>
      <li class="f"><i class="chev"></i><i class="cb"></i><svg class="fic" width="18" height="18"><use href="#mtb"/></svg><span>helpful_reviews</span></li>
      <li class="f"><i class="chev"></i><i class="cb"></i><i class="fic"></i><span>posted_at</span></li>
      <li class="f"><i class="chev"></i><i class="cb"></i><svg class="fic" width="15" height="15"><use href="#sig"/></svg><span>rating</span></li>
    </ul>
  </aside>
</main>

<footer class="status">
  <span class="pageinfo">Page 1 of 3</span>
  <div class="zoomctl">
    <span class="zm">-</span>
    <div class="slider"><i></i></div>
    <span class="zp">+</span>
    <span class="pct">110%</span>
    <svg width="20" height="16" viewBox="0 0 20 16"><rect x=".7" y=".7" width="18.600" height="14.600" fill="none" stroke="#605e5c" stroke-width="1.300"/><path d="M6 4H3.500v2.500M14 4h2.500v2.500M6 12H3.500V9.500M14 12h2.500V9.500" fill="none" stroke="#605e5c"/></svg>
  </div>
</footer>
<div class="bottomline"></div>
</body>
</html>
```

FILE: styles.css
```css
* { box-sizing: border-box; }
html, body { margin: 0; padding: 0; }
body {
  width: 1916px; height: 1003px; overflow: hidden;
  display: flex; flex-direction: column;
  font-family: "Noto Sans", "Open Sans", sans-serif;
  font-size: 14px; color: #252423; background: #f3f2f1;
}
ul { list-style: none; margin: 0; padding: 0; }
h2 { margin: 0; font-weight: 400; font-size: 19px; }
i { font-style: normal; display: block; }
button { font: inherit; letter-spacing: inherit; }
.defs { display: none; }

.topbar { height: 3px; background: #3b3a39; flex: none; }
.bottomline { height: 2px; background: #10202a; flex: none; }

/* ribbon */
.ribbon { height: 157px; flex: none; background: #fafafa; position: relative; z-index: 2; box-shadow: 0 2px 4px rgba(0,0,0,.18); }
.tabs { height: 38px; display: flex; align-items: stretch; font-size: 16.5px; }
.tab { display: flex; align-items: center; margin-right: 39.5px; position: relative; padding-bottom: 2px; }
.tab.file { margin-left: 29px; margin-right: 47px; }
.tab.on { font-weight: 600; letter-spacing: -.3px; }
.tab.on::after { content: ""; position: absolute; left: 0; right: 0; bottom: 0; height: 3px; background: #117865; }
.ctx { display: flex; align-items: center; background: #fff; color: #117865; font-weight: 600; padding: 0 19px 2px; width: 124px; white-space: nowrap; margin-left: 5px; }
.ctx.first { margin-left: -20px; width: 94px; padding-left: 19px; }
.share { margin: 5px 3px 3px auto; width: 105px; height: 30px; background: #117865; color: #fff; border: 0; border-radius: 3px; display: flex; align-items: center; gap: 6px; padding: 0 0 0 9px; font-size: 14px; }

.groups { height: 119px; display: flex; position: relative; padding-top: 7px; }
.group { height: 111px; border-right: 1px solid #e1dfdd; display: flex; flex-direction: column; justify-content: space-between; }
.g-clip { width: 201px; }
.g-data { width: 459px; }
.g-query { width: 145px; }
.g-insert { width: 184px; }
.g-calc { width: 143px; }
.g-sens { width: 91px; }
.g-share { width: 74px; }
.g-copilot { width: 74px; }
.items { display: flex; padding-top: 4px; }
.pl1 { padding-left: 1px; } .pl6 { padding-left: 6px; } .pl11 { padding-left: 11px; } .pl12 { padding-left: 12px; } .pl14 { padding-left: 14px; }
.gname { height: 14px; line-height: 14px; font-size: 12px; text-align: center; color: #3b3a39; white-space: nowrap; }
.item { display: flex; flex-direction: column; align-items: center; flex: none; }
.w34 { width: 34px; } .w38 { width: 38px; } .w42 { width: 42px; } .w50 { width: 50px; } .w58 { width: 58px; } .w60 { width: 60px; } .w62 { width: 62px; } .w64 { width: 64px; } .w74 { width: 74px; } .w80 { width: 80px; } .w90 { width: 90px; }
.ico { width: 40px; height: 40px; margin: 2px 0 3px; flex: none; }
.lbl { line-height: 20px; text-align: center; white-space: nowrap; font-size: 14px; color: #323130; letter-spacing: -.1px; }
.dim .lbl { color: #c8c6c4; }
.dim .ico { opacity: .85; }
.mini { width: 8px; height: 8px; margin-left: 3px; vertical-align: -1px; }
.dim .mini { opacity: .4; margin-left: 0; }
.cliplist { margin: -5px 0 0 8px; }
.cliplist li { height: 30px; display: flex; align-items: center; white-space: nowrap; }
.sm { width: 20px; height: 20px; margin-right: 6px; flex: none; }
.collapse { position: absolute; right: 2px; bottom: 6px; }
.xl { font: 700 13px "Liberation Sans", sans-serif; fill: #fff; text-anchor: middle; }
.alett { font: 400 24px "Noto Sans", sans-serif; fill: #2d85c7; text-anchor: middle; }

/* main */
.main { height: 812px; flex: none; display: flex; }
.rail { width: 51px; flex: none; border-right: 1px solid #e1dfdd; display: flex; flex-direction: column; }
.railbtn { height: 50px; display: flex; align-items: center; justify-content: center; padding-bottom: 2px; }
.railbtn.active { box-shadow: inset 3px 0 0 #117865; }
.daxt { font: 700 7px "Noto Sans", sans-serif; fill: #8a8886; }
.center { width: 1374px; flex: none; display: flex; flex-direction: column; }
.notice { height: 45px; flex: none; display: flex; align-items: center; padding-left: 15px; }
.infoi { margin-right: 11px; }
.msg { font-size: 14px; flex: 1; color: #3b3a39; padding-top: 2px; }
.viewbtn { width: 201px; height: 30px; background: #fff; border: 1px solid #8a8886; font-size: 16.5px; color: #252423; margin: 0 11px 0 0; padding: 2px 0 0; font-weight: 500; }
.closex { margin-right: 13px; }

.workrow { height: 723px; flex: none; display: flex; background: #fff; }
.canvas { width: 1124px; flex: none; position: relative; background: #fff; }
.chart { display: block; }
.grid path { stroke: #c8c6c4; stroke-width: 1; stroke-dasharray: 1.5 5.5; fill: none; }
.ytick text { font: 400 16px "Noto Sans", sans-serif; fill: #605e5c; text-anchor: end; letter-spacing: -.3px; }
.xtick text { font: 400 16px "Noto Sans", sans-serif; fill: #605e5c; text-anchor: middle; }
.ctitle { font: 700 27.5px Roboto, sans-serif; fill: #252423; text-anchor: middle; }
.axt { font: 500 19px Roboto, sans-serif; fill: #252423; text-anchor: middle; }
.series { fill: none; stroke: #118dff; stroke-width: 4; stroke-linejoin: miter; stroke-linecap: round; }
.frame { fill: none; stroke: #a19f9d; stroke-width: 1; }
.dotsl { stroke: #605e5c; stroke-width: 2; stroke-dasharray: 2 1.5; }
.hdl { fill: #a19f9d; }
.vh path { fill: none; stroke: #8a8886; stroke-width: 1.2; }
.vdots { fill: #605e5c; }
.vscroll { position: absolute; left: 1110px; top: 0; width: 11px; height: 519px; background: #c8c8c8; }
.hscroll { position: absolute; left: 0; top: 710px; width: 692px; height: 11px; background: #c8c8c8; border-radius: 0 6px 6px 6px; }

.filters { flex: none; border-left: 1px solid #a19f9d; margin-left: -1px; width: 251px; background: #fff; }
.fsearchwrap { height: 55px; border-bottom: 1px solid #a19f9d; padding: 12px 0 0 10px; }
.fsearch { width: 225px; height: 38px; border: 1px solid #c8c6c4; border-radius: 2px; display: flex; align-items: center; padding-left: 12px; gap: 16px; font-size: 15px; }
.fgroup { padding: 34px 10px 0; }
.fgroup.first { padding-top: 22px; }
.fhead { height: 20px; margin-bottom: 11px; display: flex; justify-content: space-between; line-height: 20px; }
.fhead b { font-weight: 400; letter-spacing: 1px; margin-right: 5px; position: relative; top: -1px; }
.fcard { width: 230px; height: 56px; border: 1px solid #d2d0ce; border-radius: 2px; background: #fff; margin-bottom: 9px; }
.fgroup .fcard:last-child { margin-bottom: 0; height: 56px; }
.fcard.left { display: flex; flex-direction: column; justify-content: center; gap: 3px; padding: 1px 0 0 10px; line-height: 20px; }
.fcard.add { display: flex; align-items: center; justify-content: center; }

.pagebar { height: 44px; flex: none; display: flex; background: #f3f2f1; }
.devices { width: 160px; flex: none; display: flex; align-items: flex-start; position: relative; }
.dev { display: flex; justify-content: center; }
.dev.on { width: 30px; margin-left: 13px; height: 36px; padding-top: 5px; border-bottom: 3px solid #117865; border-radius: 0 0 2px 2px; }
.dev:not(.on) { margin-left: 31px; padding-top: 5px; }
.parrow { margin: 12px 0 0 25px; }
.parrow.two { margin-left: 20px; }
.ptab { height: 44px; background: #fff; display: flex; align-items: center; justify-content: center; border-right: 1px solid #c8c6c4; }
.ptab.active { width: 155px; font-weight: 600; border-right-color: #c8c6c4; border-bottom: 5px solid #117865; padding-top: 5px; }
.ptab.rev { width: 103px; }
.ptab.arev { width: 135px; border-right: 0; }
.padd { width: 48px; background: #117865; color: #fff; font: 700 24px "Liberation Sans", sans-serif; display: flex; align-items: center; justify-content: center; padding-bottom: 4px; }

/* quick measure */
.qm { width: 44px; flex: none; border-left: 1px solid #e1dfdd; border-right: 1px solid #e1dfdd; padding: 16px 0 0 13px; }
.qm svg { display: block; }
.qmtxt { writing-mode: vertical-rl; font-size: 18.5px; font-weight: 500; margin: 18px 0 0 -6px; line-height: 24px; white-space: nowrap; }

/* panels */
.phead { height: 45px; display: flex; align-items: center; justify-content: space-between; padding: 5px 12px 0 10px; }
.viz { width: 227px; flex: none; border-right: 1px solid #e1dfdd; }
.viz .phead { padding-right: 10px; }
.buildlbl { font-weight: 500; line-height: 20px; height: 27px; padding: 3px 0 0 10px; }
.vtabs { height: 56px; border-bottom: 1px solid #8a8886; display: flex; padding-left: 10px; position: relative; }
.caret { position: absolute; left: 19px; bottom: -1px; }
.vtab { width: 40px; height: 40px; flex: none; display: flex; align-items: center; justify-content: center; margin-right: 40px; }
.vtab.sel { background: #d2d0ce; border-radius: 2px; margin-right: 44px; }
.vgrid { display: grid; grid-template-columns: repeat(6, 35px); grid-auto-rows: 35px; padding: 7px 0 0 7.5px; justify-items: center; align-items: center; }
.vgrid svg { width: 24px; height: 24px; overflow: visible; }
.vgrid .selected { outline: 1px solid #252423; outline-offset: 2px; }
.s { fill: none; stroke: #444; stroke-width: 1.5; }
.bl { fill: #74b3e8; stroke: #1f6eb5; stroke-width: 1; }
.gr { fill: #b3b0ad; stroke: #8a8886; stroke-width: 1; }
.wh { fill: #fff; stroke: #666; stroke-width: 1; }
.n123 { font: 400 11px "Noto Sans", sans-serif; fill: #2b88d8; text-anchor: middle; }
.rl { font: 700 20px "Noto Sans", sans-serif; fill: #1f7ab8; text-anchor: middle; }
.py { font: 700 21px "Noto Sans", sans-serif; fill: #1f7ab8; text-anchor: middle; }
.vmore { height: 41px; padding-left: 14px; letter-spacing: 2px; font-size: 18px; font-weight: 600; line-height: 22px; color: #444; }
.wells { height: 381px; overflow: hidden; border-top: 1px solid #e1dfdd; position: relative; padding: 11px 0 0 5px; }
.wlabel { height: 20px; line-height: 20px; margin: 0 0 6px 10px; }
.well { width: 213px; height: 34px; background: #fff; border: 1px dashed #c8c6c4; margin-bottom: 14.5px; display: flex; align-items: center; padding-left: 13px; }
.well.tall { height: 35px; }
.well.has { height: 44px; align-items: flex-start; padding: 4px 0 0 3px; }
.chip { width: 205px; height: 27px; background: #ebebeb; border: 1px solid #c8c6c4; border-radius: 2px; display: flex; align-items: center; padding-left: 5px; gap: 6px; }
.chip span { flex: 1; white-space: nowrap; }
.chip svg:last-child { margin-right: 5px; }
.wscroll { position: absolute; left: 218px; top: 3px; width: 6px; height: 233px; background: #c8c8c8; border-radius: 3px; }

.data { width: 220px; flex: none; }
.data .phead { padding: 5px 6px 0 9px; }
.dsearch { margin: 13px 1px 0 4px; height: 30px; background: #fff; border: 1px solid #d2d0ce; border-radius: 3px; display: flex; align-items: center; padding-left: 12px; gap: 11px; color: #605e5c; font-size: 15.5px; }
.dsearch svg { margin-top: 1px; }
.tree { margin-top: 10px; }
.tree li { height: 30px; display: flex; align-items: center; white-space: nowrap; }
.t { padding-left: 18px; }
.f { padding-left: 36px; }
.chev { width: 12px; height: 12px; flex: none; margin-right: 6px; }
.tic { width: 15px; height: 16px; flex: none; margin-right: 7px; position: relative; display: block; }
.tic svg { display: block; }
.tic .badge { position: absolute; left: 7px; top: 7px; }
.cb { width: 15px; height: 15px; border: 1px solid #8a8886; border-radius: 2px; flex: none; margin-right: 10px; }
.cb.on { background: #117865; border-color: #117865; }
.cb.on svg { display: block; margin: -1px; }
.fic { width: 15px; flex: none; margin-right: 7px; overflow: visible; }
svg.fic[width="18"] { width: 18px; margin-right: 4px; }

/* status */
.status { height: 29px; flex: none; border-top: 1px solid #e1dfdd; display: flex; align-items: center; justify-content: space-between; padding: 0 19px 0 5px; }
.pageinfo { color: #484644; }
.zoomctl { display: flex; align-items: center; }
.zm { font-weight: 700; width: 9px; }
.slider { width: 125px; height: 1px; background: #605e5c; position: relative; margin-right: 8px; }
.slider i { position: absolute; left: 62px; top: -6px; width: 5px; height: 13px; background: #605e5c; }
.zp { font-size: 18px; width: 24px; }
.pct { color: #605e5c; width: 53px; font-size: 15px; }
```
